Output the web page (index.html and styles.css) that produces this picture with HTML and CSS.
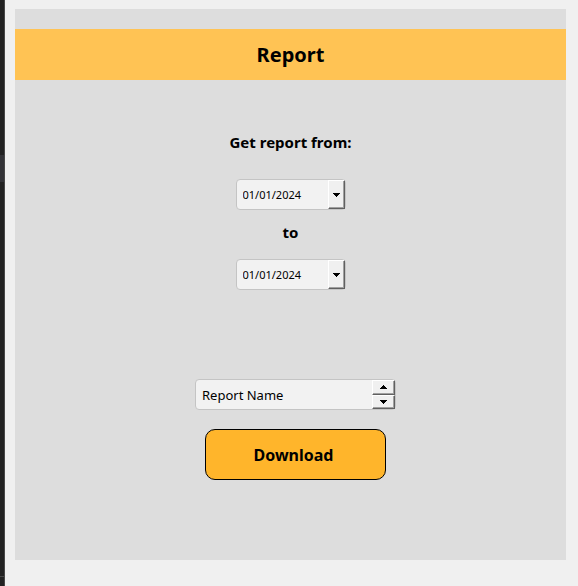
FILE: index.html
```html
<!DOCTYPE html>
<html lang="en">
<head>
<meta charset="utf-8">
<title>Report</title>
<link rel="stylesheet" href="styles.css">
</head>
<body>
<div class="edge"><div class="edge-mark"></div><div class="edge-line"></div></div>
<main class="page">
  <form class="panel">
    <h1 class="title">Report</h1>
    <label class="caption" for="from">Get report from:</label>
    <div class="field date">
      <input id="from" type="text" value="01/01/2024">
      <button class="bevel" type="button" aria-label="Choose start date"><svg width="7" height="4" viewBox="0 0 7 4" shape-rendering="crispEdges"><path d="M0 0h7v1h-1v1h-1v1h-1v1h-1v-1h-1v-1h-1v-1h-1z"/></svg></button>
    </div>
    <label class="caption" for="to">to</label>
    <div class="field date">
      <input id="to" type="text" value="01/01/2024">
      <button class="bevel" type="button" aria-label="Choose end date"><svg width="7" height="4" viewBox="0 0 7 4" shape-rendering="crispEdges"><path d="M0 0h7v1h-1v1h-1v1h-1v1h-1v-1h-1v-1h-1v-1h-1z"/></svg></button>
    </div>
    <div class="output">
      <div class="field name">
        <input type="text" value="Report Name" aria-label="Report name">
        <div class="steps">
          <button class="bevel" type="button" aria-label="Previous"><svg width="7" height="4" viewBox="0 0 7 4" shape-rendering="crispEdges"><path d="M3 0h1v1h1v1h1v1h1v1h-7v-1h1v-1h1v-1h1z"/></svg></button>
          <button class="bevel" type="button" aria-label="Next"><svg width="7" height="4" viewBox="0 0 7 4" shape-rendering="crispEdges"><path d="M0 0h7v1h-1v1h-1v1h-1v1h-1v-1h-1v-1h-1v-1h-1z"/></svg></button>
        </div>
      </div>
      <button class="download" type="button">Download</button>
    </div>
  </form>
</main>
</body>
</html>
```
FILE: styles.css
```css
* {
  box-sizing: border-box;
}

body {
  margin: 0;
  min-height: 100vh;
  display: flex;
  background: #f0f0f0;
  color: #000;
  font-family: "Noto Sans", "Open Sans", sans-serif;
}

.edge {
  width: 5px;
  flex: none;
  display: flex;
  flex-direction: column;
  justify-content: space-between;
  padding: 155px 0 9px;
  background: #222;
  border-right: 1px solid #484848;
}

.edge-mark {
  height: 27px;
  background: #333337;
}

.edge-line {
  height: 1px;
  background: #484848;
}

.page {
  flex: 1;
  display: flex;
  padding: 9px 12px 26px 10px;
}

.panel {
  flex: 1;
  display: flex;
  flex-direction: column;
  align-items: center;
  padding: 20px 0;
  background: #ddd;
}

.title {
  align-self: stretch;
  margin: 0 0 52px;
  font-size: 20px;
  line-height: 51px;
  text-align: center;
  background: #ffc354;
}

.caption {
  font-size: 15px;
  font-weight: 700;
  line-height: 21px;
}

.field {
  display: flex;
  height: 31px;
  background: #f2f2f2;
  border: 1px solid #c4c4c4;
  border-radius: 4px;
}

.field input {
  flex: 1;
  min-width: 0;
  padding: 0 0 0 6px;
  border: 0;
  background: transparent;
  color: inherit;
  font: 11px "Noto Sans", "Open Sans", sans-serif;
}

.date {
  width: 110px;
  margin: 26px 0 12px;
}

.caption + .date ~ .caption + .date {
  margin: 16px 0 0;
}

.bevel {
  width: 17px;
  display: flex;
  align-items: center;
  justify-content: center;
  padding: 0;
  border: 1px solid;
  border-color: #fff #606060 #606060 #fff;
  box-shadow: inset -1px -1px #a0a0a0;
  background: #f0f0f0;
}

.output {
  display: flex;
  flex-direction: column;
  align-items: center;
  gap: 19px;
  margin-top: 89px;
  padding-left: 10px;
}

.name {
  width: 201px;
}

.name input {
  font-size: 13px;
}

.steps {
  display: flex;
  flex-direction: column;
}

.steps .bevel {
  flex: 1;
  width: 23px;
}

.download {
  width: 181px;
  height: 51px;
  padding: 0 4px 0 0;
  border: 1px solid #000;
  border-radius: 10px;
  background: #ffb52b;
  color: #000;
  font: 700 16px "Noto Sans", "Open Sans", sans-serif;
}
```
